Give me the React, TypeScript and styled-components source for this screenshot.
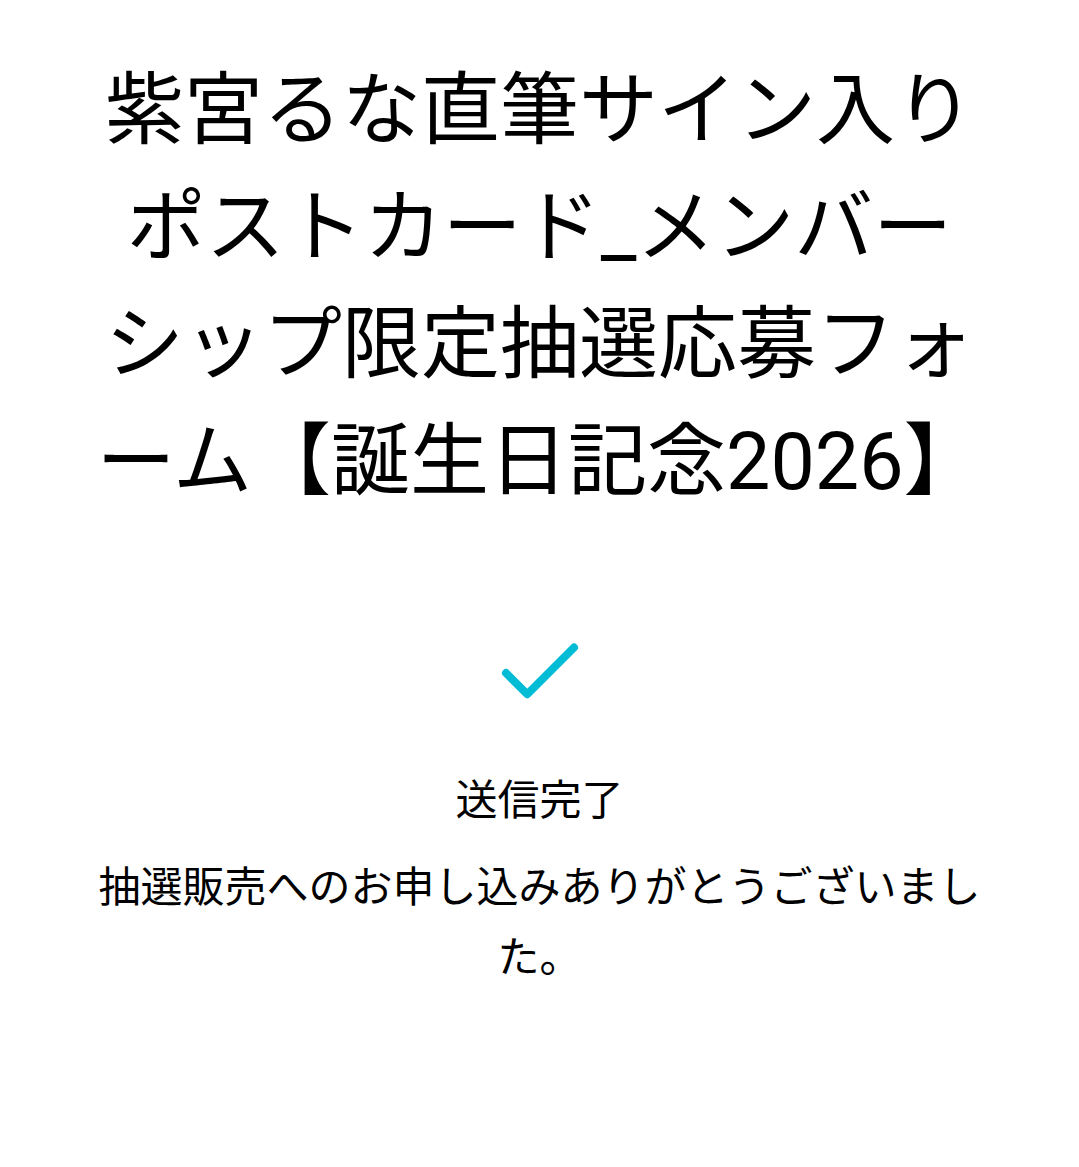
import styled, { createGlobalStyle } from 'styled-components';
import { Check } from 'lucide-react';

const GlobalStyle = createGlobalStyle`
    html, body {
        margin: 0;
        padding: 0;
        background: #ffffff;
    }
    body {
        font-family: Roboto, "Noto Sans CJK JP", sans-serif;
        color: #000000;
    }
`;

const App = () => {
    return (
        <Page>
            <GlobalStyle />
            <Title>紫宮るな直筆サイン入りポストカード_メンバーシップ限定抽選応募フォーム【誕生日記念2026】</Title>
            <Done>
                <CheckMark>
                    <Check size={102} strokeWidth={1.9} color="#00bcd4" />
                </CheckMark>
                <DoneLabel>送信完了</DoneLabel>
                <Message>抽選販売へのお申し込みありがとうございました。</Message>
            </Done>
        </Page>
    );
}

const Page = styled.div`
    width: 100%;
    min-height: 1167px;
    display: flex;
    flex-direction: column;
    align-items: center;
    padding-top: 53px;
    box-sizing: border-box;
`;

const Title = styled.h1`
    width: 890px;
    margin: 0;
    font-size: 79px;
    font-weight: 400;
    line-height: 117px;
    text-align: center;
`;

const Done = styled.div`
    width: 940px;
    display: flex;
    flex-direction: column;
    align-items: center;
    margin-top: 101px;
`;

const CheckMark = styled.div`
    display: flex;
    justify-content: center;
    height: 102px;
`;

const DoneLabel = styled.p`
    margin: 47px 0 0;
    font-size: 42px;
    line-height: 60px;
`;

const Message = styled.p`
    margin: 22px 0 0;
    font-size: 42px;
    line-height: 70px;
    text-align: center;
`;

export default App;
